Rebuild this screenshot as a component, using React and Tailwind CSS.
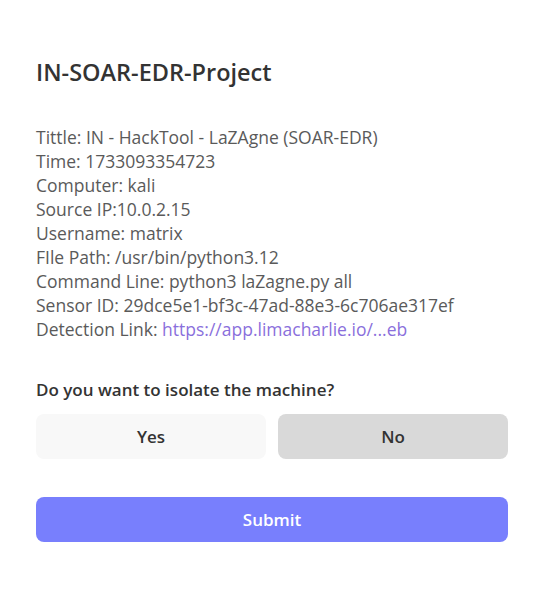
export default function App() {
  const lines = [
    "Tittle: IN - HackTool - LaZAgne (SOAR-EDR)",
    "Time: 1733093354723",
    "Computer: kali",
    "Source IP:10.0.2.15",
    "Username: matrix",
    "FIle Path: /usr/bin/python3.12",
    "Command Line: python3 laZagne.py all",
    "Sensor ID: 29dce5e1-bf3c-47ad-88e3-6c706ae317ef",
  ];
  return (
    <div className="w-[552px] h-[592px] bg-white font-['Open_Sans',sans-serif]">
      <div className="w-[472px] ml-[36px] pt-[58px] flex flex-col">
        <h1 className="text-[23.5px] leading-[28px] font-semibold text-[#333]">IN-SOAR-EDR-Project</h1>
        <div className="mt-[39px] text-[17.5px] leading-[24px] text-[#5a5a5a]">
          {lines.map((l) => (
            <div key={l}>{l}</div>
          ))}
          <div>
            Detection Link: <a className="text-[#8a6fdc]" href="#">https://app.limacharlie.io/...eb</a>
          </div>
        </div>
        <div className="mt-[37px] text-[17px] leading-[24px] font-semibold text-[#333]">Do you want to isolate the machine?</div>
        <div className="mt-[12px] grid grid-cols-2 gap-[12px]">
          <button className="h-[45px] rounded-[8px] bg-[#f8f8f8] text-[17px] font-semibold text-[#333]">Yes</button>
          <button className="h-[45px] rounded-[8px] bg-[#d9d9d9] text-[17px] font-semibold text-[#333]">No</button>
        </div>
        <button className="mt-[38px] h-[45px] rounded-[8px] bg-[#787ffd] text-[17px] font-semibold text-white">Submit</button>
      </div>
    </div>
  );
}
